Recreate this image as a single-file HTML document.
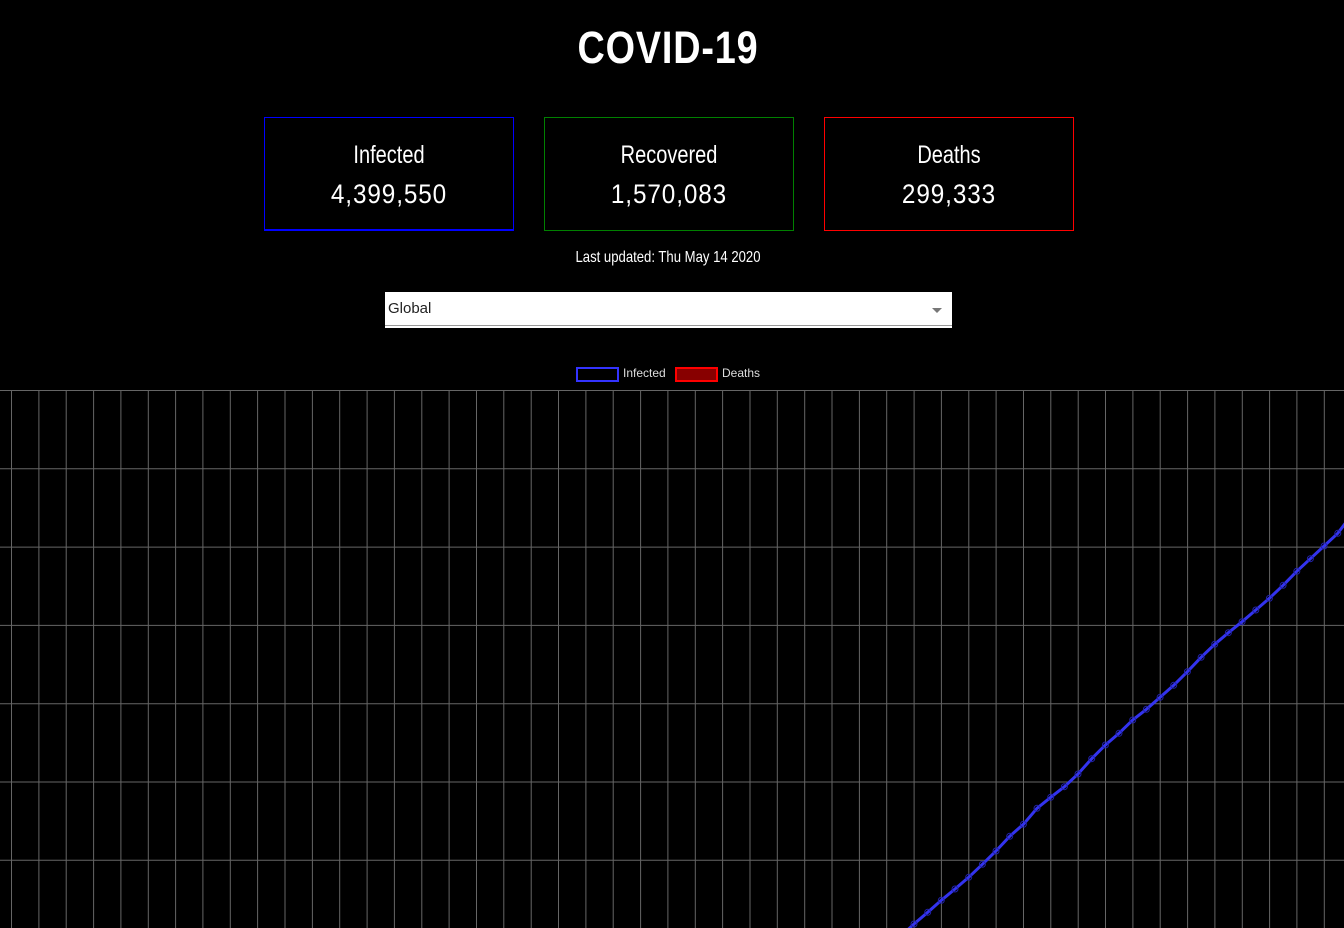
<!DOCTYPE html>
<html><head><style>
body{margin:0;background:#000;width:1344px;height:928px;overflow:hidden;position:relative;font-family:"Liberation Sans",sans-serif;color:#fff}
.t{position:absolute;white-space:nowrap;transform-origin:center;text-align:center}
.box{position:absolute;top:117px;width:250px;height:114px;box-sizing:border-box}
</style></head><body>
<div class="t" style="left:468px;width:400px;top:22px;font-size:45px;font-weight:bold;transform:scaleX(0.84);line-height:52px;letter-spacing:1px">COVID-19</div>

<div class="box" style="left:264px;border:1px solid #0000ff;border-bottom-width:2px"></div>
<div class="box" style="left:544px;border:1px solid #008000"></div>
<div class="box" style="left:824px;border:1px solid #ff0000"></div>

<div class="t" style="left:264px;width:250px;top:140px;font-size:25px;transform:scaleX(0.8);line-height:30px">Infected</div>
<div class="t" style="left:264px;width:250px;top:179px;font-size:27px;transform:scaleX(0.9);line-height:30px;letter-spacing:1px">4,399,550</div>
<div class="t" style="left:544px;width:250px;top:140px;font-size:25px;transform:scaleX(0.8);line-height:30px">Recovered</div>
<div class="t" style="left:544px;width:250px;top:179px;font-size:27px;transform:scaleX(0.9);line-height:30px;letter-spacing:1px">1,570,083</div>
<div class="t" style="left:824px;width:250px;top:140px;font-size:25px;transform:scaleX(0.8);line-height:30px">Deaths</div>
<div class="t" style="left:824px;width:250px;top:179px;font-size:27px;transform:scaleX(0.9);line-height:30px;letter-spacing:1px">299,333</div>

<div class="t" style="left:518px;width:300px;top:248px;font-size:16px;transform:scaleX(0.82);line-height:20px">Last updated: Thu May 14 2020</div>

<div style="position:absolute;left:385px;top:292px;width:567px;height:36px;background:#fff"></div>
<div style="position:absolute;left:385px;top:325px;width:567px;height:1px;background:#999"></div>
<div style="position:absolute;left:388px;top:300px;font-size:15px;color:#222">Global</div>
<div style="position:absolute;left:932px;top:308px;width:0;height:0;border-left:5px solid transparent;border-right:5px solid transparent;border-top:5px solid #777"></div>

<div style="position:absolute;left:576px;top:367px;width:39px;height:11px;border:2px solid #3333ff;background:#000"></div>
<div style="position:absolute;left:623px;top:366px;font-size:12px;color:#ddd">Infected</div>
<div style="position:absolute;left:675px;top:367px;width:39px;height:11px;border:2px solid #ff0000;background:#880000"></div>
<div style="position:absolute;left:722px;top:366px;font-size:12px;color:#ddd">Deaths</div>

<svg style="position:absolute;left:0;top:0" width="1344" height="928">
<g stroke="#666" stroke-width="1" id="g"></g>
<polyline id="pl" fill="none" stroke="#3333ee" stroke-width="3"/>
<g id="pts" fill="none" stroke="#2222aa" stroke-width="1"></g>
</svg>
<script>
var g=document.getElementById('g'),s='';
for(var y=390.5;y<928;y+=78.3)s+='<line x1="0" x2="1344" y1="'+y.toFixed(1)+'" y2="'+y.toFixed(1)+'"/>';
for(var x=11.5;x<1344;x+=27.35)s+='<line y1="390" y2="928" x1="'+x.toFixed(1)+'" x2="'+x.toFixed(1)+'"/>';
g.innerHTML=s;
var ys=[924,912.3,900.3,889,877.3,864.3,851,836.3,824.3,808.3,797.3,786.7,774,758.7,745,733.3,720,709.3,697.3,685.3,671.7,657.3,644.3,632.7,621.7,610,598.3,585.3,571.3,558.7,546,533.3];
var p=['900,937'],c='';
for(var i=0;i<ys.length;i++){var xx=914+13.67*i;p.push(xx.toFixed(1)+','+ys[i]);c+='<circle cx="'+xx.toFixed(1)+'" cy="'+ys[i]+'" r="3"/>';}
p.push('1350,517');
document.getElementById('pl').setAttribute('points',p.join(' '));
document.getElementById('pts').innerHTML=c;
</script>
</body></html>
